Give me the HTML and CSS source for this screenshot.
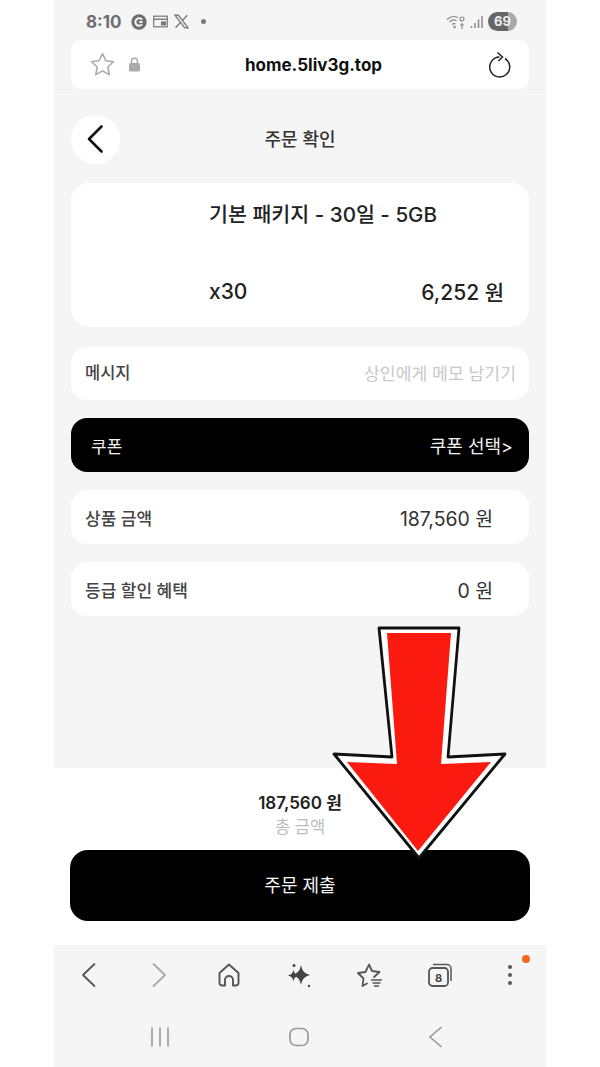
FILE: index.html
```html
<!DOCTYPE html>
<html lang="ko">
<head>
  <meta charset="UTF-8">
  <meta name="viewport" content="width=device-width, initial-scale=1.0">
  <title>주문 확인</title>
  <link rel="stylesheet" href="styles.css">
</head>
<body>
  <div class="phone">
    <div class="status-bar">
      <div class="status-left">
        <span class="time">8:10</span>
        <svg class="status-icon" width="16" height="16" viewBox="0 0 15 15"><circle cx="7.5" cy="7.5" r="7.2" fill="#6e6e6e"/><path d="M10.4 5.4a3.5 3.5 0 1 0 0 4.2M7.8 7.5h3" fill="none" stroke="#f5f5f5" stroke-width="1.8"/></svg>
        <svg class="status-icon" width="15" height="13" viewBox="0 0 15 13"><rect x=".7" y="1.2" width="13.6" height="10.6" fill="none" stroke="#777" stroke-width="1.2"/><path d="M1 4.2h13" stroke="#777" stroke-width="1.4"/><rect x="8" y="6.4" width="5" height="4" fill="#777"/></svg>
        <svg class="status-icon" width="15" height="15" viewBox="0 0 16 15"><path d="M1 .8h3.6l10.4 13.4h-3.6zM14 .8 8.8 6.6M6.600 8.800 1.600 14.200" fill="none" stroke="#777" stroke-width="1.400"/></svg>
        <span class="status-dot"></span>
      </div>
      <div class="status-right">
        <svg width="20" height="16" viewBox="0 0 20 16"><path d="M1 5.500a10 10 0 0 1 11-2M3.500 8a6.500 6.500 0 0 1 7-1.500M6 10.500a3 3 0 0 1 3.500-.5" fill="none" stroke="#8a8a8a" stroke-width="1.200"/><circle cx="8.500" cy="13" r="1.200" fill="#8a8a8a"/><circle cx="16" cy="5" r="2" fill="none" stroke="#8a8a8a" stroke-width="1.200"/><path d="M14 11h4M16 9v6" stroke="#8a8a8a" stroke-width="1.200"/></svg>
        <svg width="14" height="14" viewBox="0 0 14 14"><path d="M1.500 13v-2M5 13V8M8.500 13V4.500M12 13V1" stroke="#8a8a8a" stroke-width="1.500"/></svg>
        <span class="battery">69</span>
      </div>
    </div>

    <div class="url-bar">
      <svg class="url-star" width="27" height="27" viewBox="0 0 26 26"><path d="M13 2.500l3.200 6.900 7.300.9-5.400 5.100 1.400 7.400-6.500-3.700-6.500 3.700 1.400-7.400-5.400-5.100 7.300-.9z" fill="none" stroke="#a8a8a8" stroke-width="1.500" stroke-linejoin="round"/></svg>
      <svg class="url-lock" width="13" height="15" viewBox="0 0 13 15"><rect x="1" y="6" width="11" height="8.500" rx="1.500" fill="#aaa"/><path d="M3.500 6.500V4.200a3 3 0 0 1 6 0v2.300" fill="none" stroke="#aaa" stroke-width="1.500"/></svg>
      <span class="url-text">home.5liv3g.top</span>
      <svg class="url-reload" width="26" height="28" viewBox="0 0 26 28"><path d="M13.500 6A10 10 0 1 0 19 7.500" fill="none" stroke="#222" stroke-width="1.500"/><path d="M11.500 1.500l5 4.500-4 4" fill="none" stroke="#222" stroke-width="1.500"/></svg>
    </div>
    <div class="divider"></div>

    <main class="content">
      <header class="page-header">
        <a class="back-btn">
          <svg width="18" height="30" viewBox="0 0 18 30"><path d="M15.500 2.500 3 15l12.500 12.500" fill="none" stroke="#111" stroke-width="2.600" stroke-linecap="round" stroke-linejoin="round"/></svg>
        </a>
        <h1>주문 확인</h1>
      </header>

      <section class="product-card">
        <div class="product-name">기본 패키지 - 30일 - 5GB</div>
        <div class="product-bottom">
          <span class="qty">x30</span>
          <span class="unit-price">6,252 원</span>
        </div>
      </section>

      <div class="row message-row">
        <span class="row-label">메시지</span>
        <span class="placeholder">상인에게 메모 남기기</span>
      </div>

      <div class="row coupon-row">
        <span class="coupon-label">쿠폰</span>
        <span class="coupon-pick">쿠폰 선택&gt;</span>
      </div>

      <div class="row amount-row">
        <span class="row-label">상품 금액</span>
        <span class="row-value">187,560 원</span>
      </div>

      <div class="row amount-row">
        <span class="row-label">등급 할인 혜택</span>
        <span class="row-value">0 원</span>
      </div>
    </main>

    <section class="checkout">
      <div class="total-price">187,560 원</div>
      <div class="total-label">총 금액</div>
      <button class="submit-btn">주문 제출</button>
    </section>

    <nav class="browser-nav">
      <svg width="18" height="26" viewBox="0 0 18 26"><path d="M14.500 2 3 13l11.500 11" fill="none" stroke="#555" stroke-width="1.800" stroke-linecap="round" stroke-linejoin="round"/></svg>
      <svg width="18" height="26" viewBox="0 0 18 26"><path d="M3.500 2 15 13 3.500 24" fill="none" stroke="#aaa" stroke-width="1.800" stroke-linecap="round" stroke-linejoin="round"/></svg>
      <svg width="24" height="26" viewBox="0 0 24 26"><path d="M8 23.500H5a2.500 2.500 0 0 1-2.500-2.500V11L12 2.500 21.500 11v10a2.500 2.500 0 0 1-2.500 2.500h-3V18a4 4 0 0 0-8 0z" fill="none" stroke="#555" stroke-width="1.900" stroke-linejoin="round"/></svg>
      <svg width="24" height="26" viewBox="0 0 24 26"><path d="M14 3c1.200 6 3 8 9 10-6 2-7.800 4-9 10-1.200-6-3-8-9-10 6-2 7.800-4 9-10zM6.500 7.500c.7 3.500 2 5 5.500 6-3.500 1-4.800 2.500-5.500 6-.7-3.500-2-5-5.500-6 3.500-1 4.800-2.500 5.500-6z" fill="#444"/><circle cx="7" cy="3.500" r="1.500" fill="#444"/><circle cx="22" cy="24" r="1.200" fill="#444"/></svg>
      <svg width="28" height="26" viewBox="0 0 28 26"><path d="M13 2.500l3 6.500 7.500 1-5.500 5M11 21.500l-4.500 2.500 1-7.500-5.500-5.500 7.500-1 2.700-5.800" fill="none" stroke="#555" stroke-width="1.800" stroke-linecap="round" stroke-linejoin="round"/><path d="M15 18h11M16.500 21h8M18 24h5" stroke="#555" stroke-width="1.700"/></svg>
      <svg width="26" height="26" viewBox="0 0 26 26"><rect x="2" y="6" width="19" height="18" rx="3.500" fill="none" stroke="#555" stroke-width="1.800"/><path d="M6 2.500h14a4 4 0 0 1 4 4V19" fill="none" stroke="#555" stroke-width="1.500"/><text x="11.500" y="19.500" class="tab-count">8</text></svg>
      <svg width="8" height="26" viewBox="0 0 8 26"><circle cx="4" cy="5" r="2" fill="#555"/><circle cx="4" cy="13" r="2" fill="#555"/><circle cx="4" cy="21" r="2" fill="#555"/></svg>
      <span class="notify-dot"></span>
    </nav>

    <div class="system-nav">
      <svg width="20" height="20" viewBox="0 0 20 20"><path d="M2 .5v19M10 .5v19M18 .5v19" stroke="#999" stroke-width="1.600"/></svg>
      <svg width="20" height="20" viewBox="0 0 20 20"><rect x="1" y="1.500" width="18" height="17" rx="6" fill="none" stroke="#999" stroke-width="1.700"/></svg>
      <svg width="16" height="22" viewBox="0 0 16 22"><path d="M13.500 1 2 11l11.500 10" fill="none" stroke="#999" stroke-width="1.600"/></svg>
    </div>

    <!-- big red arrow pasted on top of the screenshot -->
    <svg class="red-arrow" width="176" height="234" viewBox="0 0 176 234">
      <polygon points="48,2 128,2 117,131 174,128 88,232 3,128 61,131" fill="#fff" stroke="#111" stroke-width="2.800" stroke-linejoin="round"/>
      <polygon points="56,7 120,7 110,138 160,136 87,225 16,136 66,138" fill="#fb1a10"/>
    </svg>
  </div>
</body>
</html>
```

FILE: styles.css
```css
body {
  margin: 0;
  padding: 0;
  background-color: #fff;
  font-family: 'Inter', 'Noto Sans CJK KR', sans-serif;
  color: #222;
}

.phone {
  position: relative;
  width: 492px;
  height: 1067px;
  margin: 0 auto;
  background-color: #f5f5f5;
  display: flex;
  flex-direction: column;
  overflow: hidden;
}

.status-bar {
  height: 40px;
  padding: 3px 29px 0 32px;
  display: flex;
  justify-content: space-between;
  align-items: center;
  box-sizing: border-box;
}

.status-left,
.status-right {
  display: flex;
  align-items: center;
  gap: 6px;
}

.status-right {
  gap: 4px;
}

.time {
  font-size: 17px;
  font-weight: 700;
  color: #6e6e6e;
  margin-right: 3px;
}

.status-dot {
  width: 5px;
  height: 5px;
  border-radius: 50%;
  background-color: #777;
  margin-left: 6px;
}

.battery {
  width: 29px;
  height: 19px;
  border-radius: 10px;
  background: linear-gradient(to right, #666 69%, #aaa 69%);
  color: #eee;
  font-size: 13px;
  font-weight: 700;
  text-align: center;
  line-height: 19px;
}

.url-bar {
  position: relative;
  height: 49px;
  margin: 0 17px;
  padding: 0 17px 0 18px;
  background-color: #fff;
  border-radius: 11px;
  display: flex;
  align-items: center;
}

.url-lock {
  margin-left: 12px;
}

.url-text {
  flex: 1;
  text-align: center;
  font-size: 17px;
  font-weight: 700;
  color: #111;
}

.divider {
  height: 1px;
  margin-top: 5px;
  background-color: #f9f9f9;
}

.content {
  flex: 1;
  padding: 20px 17px 0;
}

.page-header {
  position: relative;
  height: 49px;
  padding-bottom: 3px;
  box-sizing: border-box;
  display: flex;
  justify-content: center;
  align-items: center;
  margin-bottom: 19px;
}

.page-header h1 {
  margin: 0;
  font-size: 18px;
  font-weight: 500;
  color: #333;
}

.back-btn {
  position: absolute;
  left: 0;
  top: 0;
  width: 49px;
  height: 49px;
  padding: 0 2px 2px 0;
  box-sizing: border-box;
  border-radius: 50%;
  background-color: #fff;
  display: flex;
  align-items: center;
  justify-content: center;
}

.product-card {
  height: 144px;
  background-color: #fff;
  border-radius: 18px;
  padding: 17px 25px 19px 138px;
  box-sizing: border-box;
  display: flex;
  flex-direction: column;
  justify-content: space-between;
  margin-bottom: 20px;
}

.product-name {
  font-size: 20.6px;
  font-weight: 500;
  line-height: 30px;
}

.product-bottom {
  height: 30px;
  display: flex;
  justify-content: space-between;
  align-items: center;
  line-height: 30px;
  font-weight: 500;
}

.qty {
  font-size: 21px;
  padding-bottom: 2px;
}

.unit-price {
  font-size: 21px;
}

.row {
  height: 54px;
  padding: 0 15px 0 14px;
  border-radius: 16px;
  background-color: #fff;
  display: flex;
  justify-content: space-between;
  align-items: center;
  box-sizing: border-box;
  font-size: 17px;
  margin-bottom: 18px;
}

.row-label {
  font-weight: 500;
  color: #444;
}

.message-row {
  height: 53px;
  padding-right: 13px;
  padding-bottom: 3px;
}

.message-row .row-label {
  font-size: 16.5px;
}

.placeholder {
  font-size: 17.2px;
  color: #c8c8c8;
}

.coupon-row {
  background-color: #000;
  color: #f0f0f0;
  padding: 0 16px 0 20px;
}

.coupon-pick {
  font-size: 18px;
}

.amount-row {
  padding-right: 36px;
}

.row-value {
  font-size: 19.4px;
  color: #333;
}

.checkout {
  height: 177px;
  box-sizing: border-box;
  background-color: #fff;
  padding: 23px 16px 0;
  text-align: center;
}

.total-price {
  font-size: 17px;
  font-weight: 600;
  line-height: 24px;
}

.total-label {
  font-size: 16.5px;
  line-height: 24px;
  color: #bbb;
  margin-bottom: 11px;
}

.submit-btn {
  width: 100%;
  height: 71px;
  padding: 0 0 3px;
  display: block;
  border: none;
  border-radius: 18px;
  background-color: #000;
  color: #f5f5f5;
  font-family: inherit;
  font-size: 18px;
  cursor: pointer;
}

.browser-nav {
  position: relative;
  height: 62px;
  padding: 0 1px 2px 0;
  display: grid;
  grid-template-columns: repeat(7, 1fr);
  justify-items: center;
  align-items: center;
  box-sizing: border-box;
}

.tab-count {
  font-size: 11px;
  font-weight: 700;
  fill: #444;
  text-anchor: middle;
}

.notify-dot {
  position: absolute;
  right: 16px;
  top: 10px;
  width: 8px;
  height: 8px;
  border-radius: 50%;
  background-color: #f4661b;
}

.system-nav {
  height: 60px;
  padding: 0 102px 1px 96px;
  display: flex;
  justify-content: space-between;
  align-items: center;
  box-sizing: border-box;
}

.red-arrow {
  position: absolute;
  left: 277px;
  top: 626px;
}
```
